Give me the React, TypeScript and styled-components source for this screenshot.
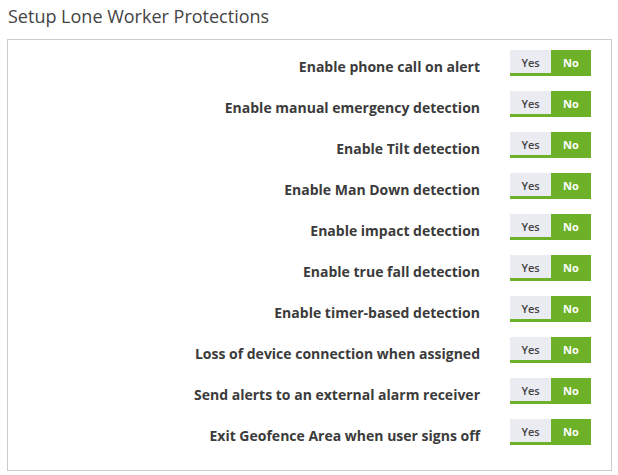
import React, { useState } from "react";
import styled, { createGlobalStyle } from "styled-components";

const GlobalStyle = createGlobalStyle`
  body {
    margin: 0;
    background: #fff;
    font-family: "Open Sans", "Liberation Sans", sans-serif;
  }
`;

const Page = styled.div`
  padding: 3px 7px 0 7px;
  width: 618px;
  box-sizing: border-box;
`;

const Title = styled.h3`
  margin: 0 0 10px 1px;
  font-size: 18px;
  font-weight: 400;
  line-height: 26px;
  color: #444;
`;

const Panel = styled.div`
  border: 1px solid #ccc;
  width: 605px;
  height: 432px;
  box-sizing: border-box;
  padding: 10px 0 0 0;
`;

const Row = styled.div`
  display: grid;
  grid-template-columns: 472px 81px;
  column-gap: 30px;
  align-items: center;
  height: 26px;
  margin-bottom: 15px;
`;

const Label = styled.label`
  text-align: right;
  font-size: 14px;
  font-weight: 700;
  color: #3b3b3b;
  padding-top: 7px;
`;

const Toggle = styled.div`
  display: flex;
  height: 26px;
`;

const Option = styled.button<{ $on: boolean; $w: number }>`
  width: ${(p) => p.$w}px;
  height: 26px;
  border: none;
  padding: 0;
  margin: 0;
  font-family: inherit;
  font-size: 11px;
  font-weight: ${(p) => (p.$on ? 700 : 600)};
  cursor: pointer;
  background: ${(p) => (p.$on ? "#6cb128" : "#ebebf2")};
  color: ${(p) => (p.$on ? "#fff" : "#444")};
  border-bottom: 3px solid #6cb128;
  box-sizing: border-box;
  padding-top: 1px;
`;

const items = [
  "Enable phone call on alert",
  "Enable manual emergency detection",
  "Enable Tilt detection",
  "Enable Man Down detection",
  "Enable impact detection",
  "Enable true fall detection",
  "Enable timer-based detection",
  "Loss of device connection when assigned",
  "Send alerts to an external alarm receiver",
  "Exit Geofence Area when user signs off",
];

const App: React.FC = () => {
  const [values, setValues] = useState<boolean[]>(items.map(() => false));
  const set = (i: number, v: boolean) =>
    setValues((prev) => prev.map((x, j) => (j === i ? v : x)));

  return (
    <Page>
      <GlobalStyle />
      <Title>Setup Lone Worker Protections</Title>
      <Panel>
        {items.map((label, i) => (
          <Row key={label}>
            <Label>{label}</Label>
            <Toggle>
              <Option $w={41} $on={values[i]} onClick={() => set(i, true)}>
                Yes
              </Option>
              <Option $w={40} $on={!values[i]} onClick={() => set(i, false)}>
                No
              </Option>
            </Toggle>
          </Row>
        ))}
      </Panel>
    </Page>
  );
};

export default App;
